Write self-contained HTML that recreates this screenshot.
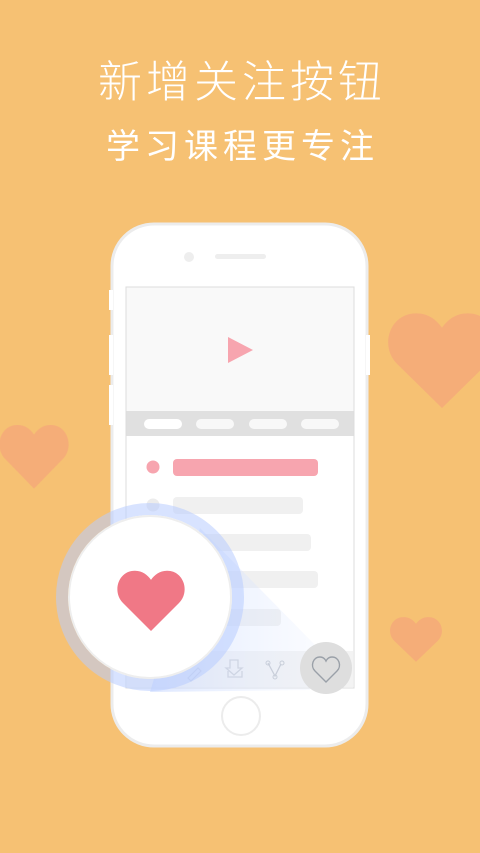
<!DOCTYPE html>
<html><head><meta charset="utf-8"><style>
body{margin:0;width:480px;height:853px;background:#f6c173;position:relative;overflow:hidden;font-family:"Liberation Sans","Noto Sans CJK SC",sans-serif}
.a{position:absolute}
.t1{left:0;width:480px;top:55px;text-align:center;color:#fff;font-size:44px;letter-spacing:4px;text-indent:4px;line-height:56px;font-weight:300}
.t2{left:0;width:480px;top:124px;text-align:center;color:#fff;font-size:34px;letter-spacing:5px;text-indent:5px;line-height:46px}
</style></head><body>
<div class="a t1">新增关注按钮</div>
<div class="a t2">学习课程更专注</div>
<svg class="a" style="left:0;top:0" width="480" height="853">
<defs><path id="h" d="M50 90 L10 50 C-6 34 3 4 27 4 C38 4 45 10 50 17 C55 10 62 4 73 4 C97 4 106 34 90 50 Z"/>
<linearGradient id="g" x1="0" y1="0" x2="1" y2="0"><stop offset="0" stop-color="#c8d8ff" stop-opacity=".6"/><stop offset="1" stop-color="#e6eeff" stop-opacity=".2"/></linearGradient></defs>
<g fill="#f5a97a" opacity=".85">
<use href="#h" transform="translate(386,309) scale(1.12,1.1)"/>
<use href="#h" transform="translate(-2,422) scale(0.72,0.74)"/>
<use href="#h" transform="translate(389,615) scale(0.54,0.52)"/>
</g>
<rect x="112" y="224" width="255" height="522" rx="42" fill="#fff" stroke="#ececec" stroke-width="3"/>
<rect x="109" y="290" width="4" height="20" fill="#fff"/><rect x="109" y="335" width="4" height="40" fill="#fff"/><rect x="109" y="385" width="4" height="40" fill="#fff"/><rect x="366" y="335" width="4" height="40" fill="#fff"/>
<circle cx="189" cy="257" r="5" fill="#eee"/><rect x="215" y="254" width="51" height="5" rx="2.5" fill="#eee"/>
<rect x="126" y="287" width="228" height="401" fill="#fff" stroke="#ddd"/>
<rect x="126.5" y="287.5" width="227" height="124" fill="#f9f9f9"/>
<path d="M228 337 L253 350 L228 363 Z" fill="#f7a5af"/>
<rect x="126.5" y="411" width="227" height="25" fill="#e0e0e0"/>
<rect x="144" y="419" width="38" height="10" rx="5" fill="#fff"/><rect x="196" y="419" width="38" height="10" rx="5" fill="#f8f8f8"/><rect x="249" y="419" width="38" height="10" rx="5" fill="#f8f8f8"/><rect x="301" y="419" width="38" height="10" rx="5" fill="#f8f8f8"/>
<circle cx="153" cy="467" r="6.5" fill="#f7a5af"/><rect x="173" y="459" width="145" height="17" rx="4" fill="#f7a5af"/>
<circle cx="153" cy="505" r="6.5" fill="#ececec"/>
<rect x="173" y="497" width="130" height="17" rx="4" fill="#f0f0f0"/>
<rect x="173" y="534" width="138" height="17" rx="4" fill="#f0f0f0"/>
<rect x="173" y="571" width="145" height="17" rx="4" fill="#f0f0f0"/>
<rect x="173" y="609" width="108" height="17" rx="4" fill="#f0f0f0"/>
<rect x="127" y="651" width="226" height="36" fill="#f3f3f3"/>
<path d="M230 660 v8 h-4 l8 7 l8 -7 h-4 v-8 Z M228 671 v6 h14 v-6" fill="none" stroke="#c9ccd2" stroke-width="1.3"/>
<path d="M268 663 l7 13 l6 -12" fill="none" stroke="#bfc3ca" stroke-width="1.3"/><circle cx="268" cy="663" r="2" fill="none" stroke="#bfc3ca"/><circle cx="282" cy="663" r="2" fill="none" stroke="#bfc3ca"/><circle cx="275" cy="677" r="2" fill="none" stroke="#bfc3ca"/>
<path d="M188 678 l10 -10 l3 3 l-10 10 Z" fill="none" stroke="#c9ccd2" stroke-width="1.2"/>
<circle cx="241" cy="716" r="19" fill="#fff" stroke="#ececec" stroke-width="2"/>
<path d="M200 528 L320 650 L310 690 L150 692 Z" fill="url(#g)"/>
<circle cx="326" cy="668" r="26" fill="#dedede"/>
<path d="M326 682 l-11 -11 C310 666 313 657 320 657 C323 657 325 659 326 661 C327 659 329 657 332 657 C339 657 342 666 337 671 Z" fill="none" stroke="#9aa0a8" stroke-width="1.4"/>
<circle cx="150" cy="597" r="88" fill="none" stroke="#b8ccff" stroke-opacity=".55" stroke-width="12"/>
<circle cx="150" cy="597" r="81" fill="#fff" stroke="#eeeeee" stroke-width="2"/>
<use href="#h" fill="#f07886" transform="translate(116,568) scale(0.7,0.7)"/>
</svg>
</body></html>
